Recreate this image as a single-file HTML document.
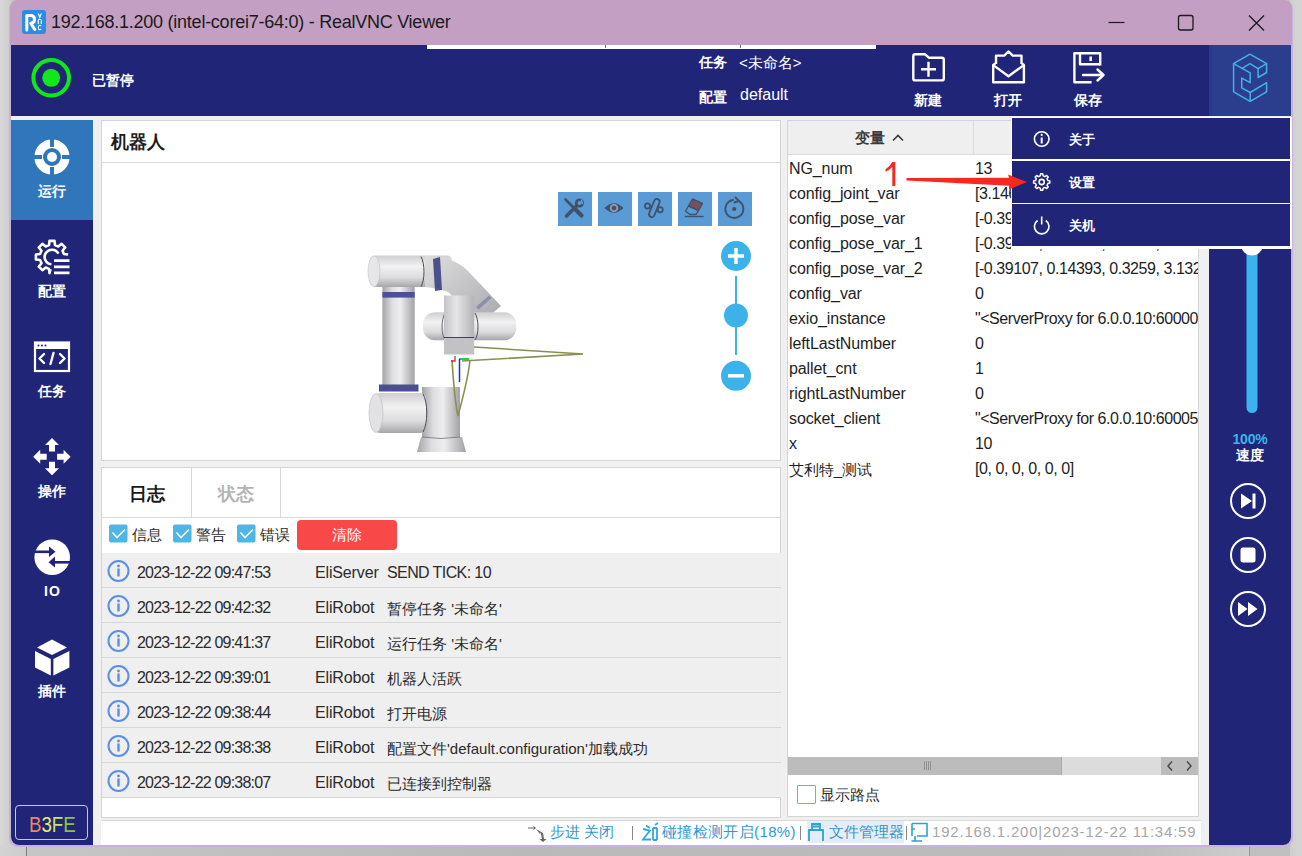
<!DOCTYPE html>
<html><head><meta charset="utf-8">
<style>
*{box-sizing:border-box;margin:0;padding:0}
html,body{width:1302px;height:856px;overflow:hidden;background:#c0c0c0;font-family:"Liberation Sans",sans-serif;position:relative}
.a{position:absolute}
svg{position:absolute;overflow:visible}
#desk-l{left:0;top:0;width:12px;height:856px;background:linear-gradient(to right,#d8d8d8,#cccccc)}
#desk-b{left:0;top:845px;width:1302px;height:11px;background:linear-gradient(to right,#d4d4d4,#c8c8c8 3%,#bdbdbd 50%,#c0c0c0)}
#desk-b2{left:26px;top:845px;width:1224px;height:11px;background:linear-gradient(to right,#c6c6c6,#b9b9b9 40%,#bcbcbc 90%,#cccccc);border-left:1px solid #808080;border-right:1px solid #9a9a9a}
#desk-r{left:1290px;top:0;width:12px;height:856px;background:linear-gradient(to right,#cfcfcf,#d6d6d6)}
#win{left:9px;top:0;width:1284px;height:847px;background:#c6b2dc;border-radius:9px}
#title{left:10px;top:0;width:1282px;height:45px;background:#c3a0c3;border-radius:8px 8px 0 0}
#title .t{left:41px;top:12px;font-size:18px;color:#1a1a1a;white-space:nowrap;letter-spacing:-0.25px}
#hdr{left:11px;top:45px;width:1280px;height:71px;background:#212577}
#main{left:11px;top:116px;width:1280px;height:729px;background:#f0f0f0;border-radius:0 0 8px 8px;overflow:hidden}
#sidebar{left:11px;top:120px;width:82px;height:725px;background:#212577;border-radius:0 0 0 8px}
#rside{left:1209px;top:120px;width:82px;height:725px;background:#212577;border-radius:0 0 8px 0}
.w{color:#fff;font-weight:bold}
.lbl{font-size:14px;color:#fff;font-weight:bold;white-space:nowrap}
.sl{width:82px;left:0;text-align:center;font-size:14px;color:#fff;font-weight:bold;margin-top:1px}
.panel{background:#fff;border:1px solid #d4d4d4}
.row{left:0;width:679px;height:35px;background:#efefef;border-bottom:1px solid #d6d6d6}
.row span{position:absolute;top:11px;font-size:16px;color:#2b2b2b;white-space:nowrap}
.row .d{left:35px;letter-spacing:-0.8px}
.row .s{left:213px;letter-spacing:-0.15px}
.row .m{left:285px;font-size:15px!important;top:12px!important}
.vr{left:0;width:410px;height:25px}
.vr span{position:absolute;top:4px;font-size:16px;color:#1e1e1e;white-space:nowrap;letter-spacing:-0.1px}
.vr .n{left:1px}
.vr .v{left:187px;letter-spacing:-0.45px}
.stt{top:823px;font-size:15px;color:#2f9ad2;white-space:nowrap}
</style></head>
<body>
<div class="a" id="desk-l"></div>
<div class="a" id="desk-b"></div>
<div class="a" id="desk-b2"></div>
<div class="a" id="desk-r"></div>
<div class="a" id="win"></div>
<div class="a" id="title">
  <div class="a t">192.168.1.200 (intel-corei7-64:0) - RealVNC Viewer</div>
</div>
<div class="a" id="hdr"></div>
<div class="a" id="main"></div>
<div class="a" id="sidebar"></div>
<div class="a" id="rside"></div>
<!-- title bar icons -->
<div class="a" style="left:22px;top:10px;width:24px;height:24px;background:#2b8de6;border-radius:3px"></div>
<svg style="left:22px;top:10px" width="24" height="24" viewBox="0 0 24 24">
 <path d="M4.8 20 V5.5 H8.5 Q12.5 5.5 12.5 9.5 Q12.5 13 8.8 13.2 L12.8 19.5" fill="none" stroke="#fff" stroke-width="3" stroke-linejoin="round" stroke-linecap="round"/>
 <path d="M16.3 3.5 L17.8 7.5 L19.3 3.5" fill="none" stroke="#fff" stroke-width="1.1"/>
 <path d="M16.3 14 V10.5 Q16.3 9.2 17.8 9.2 Q19.3 9.2 19.3 10.5 V14" fill="none" stroke="#fff" stroke-width="1.1"/>
 <path d="M19.2 16.2 Q18.5 15.3 17.7 15.3 Q16.3 15.3 16.3 17.5 Q16.3 19.7 17.7 19.7 Q18.5 19.7 19.2 18.8" fill="none" stroke="#fff" stroke-width="1.1"/>
</svg>
<svg style="left:1100px;top:8px" width="180" height="30" viewBox="0 0 180 30">
 <line x1="8.5" y1="14.5" x2="24.5" y2="14.5" stroke="#1a1a1a" stroke-width="1.2"/>
 <rect x="78.5" y="7.5" width="14.5" height="14.5" rx="2" fill="none" stroke="#1a1a1a" stroke-width="1.3"/>
 <path d="M149 7.5 L164 22.5 M164 7.5 L149 22.5" stroke="#1a1a1a" stroke-width="1.3"/>
</svg>
<!-- header -->
<div class="a" style="left:427px;top:45px;width:449px;height:4px;background:#fff"></div>
<div class="a" style="left:605px;top:45px;width:1px;height:3px;background:#777"></div>
<div class="a" style="left:740px;top:45px;width:1px;height:3px;background:#777"></div>
<svg style="left:0;top:0" width="120" height="120">
 <circle cx="51.2" cy="77.8" r="17.8" fill="none" stroke="#10e81a" stroke-width="4"/>
 <circle cx="51.2" cy="77.8" r="9" fill="#10e81a"/>
</svg>
<div class="a lbl" style="left:92px;top:72px;font-size:14px">已暂停</div>
<div class="a lbl" style="left:699px;top:54px">任务</div>
<div class="a" style="left:739px;top:54px;font-size:15px;color:#fff;white-space:nowrap">&lt;未命名&gt;</div>
<div class="a lbl" style="left:699px;top:89px">配置</div>
<div class="a" style="left:740px;top:86px;font-size:16px;color:#fff;white-space:nowrap">default</div>
<svg style="left:900px;top:45px" width="220" height="70" viewBox="900 45 220 70">
 <g fill="none" stroke="#fff" stroke-width="2.4" stroke-linejoin="round">
  <path d="M915.3 54.2 H925 L929 57.8 H941.8 Q943.8 57.8 943.8 59.8 V78.4 Q943.8 80.4 941.8 80.4 H915.3 Q913.3 80.4 913.3 78.4 V56.2 Q913.3 54.2 915.3 54.2 Z"/>
  <path d="M928.5 61.8 V76.8 M921 69.3 H936"/>
  <path d="M996 64 V55.6 H1004.2 L1008.5 51.5 L1012.8 55.6 H1021.5 V64"/>
  <path d="M995.3 63.6 L993.2 65 V82.2 H1023.9 V65 L1021.8 63.6"/>
  <path d="M994 65.6 L1008.5 76.2 L1023.2 65.6"/>
  <path d="M1091.6 82.2 H1074.4 V53.3 H1100.2 V65.6"/>
  <path d="M1080 53.3 V64.2 H1100.2"/>
  <path d="M1083 75 H1103.5 M1097.5 69.5 L1103.5 75 L1097.5 80.5" stroke-linecap="round"/>
 </g>
 <rect x="1089.4" y="56.5" width="2.6" height="4.5" fill="#fff"/>
</svg>
<div class="a lbl" style="left:914px;top:92px">新建</div>
<div class="a lbl" style="left:994px;top:92px">打开</div>
<div class="a lbl" style="left:1074px;top:92px">保存</div>
<div class="a" style="left:1209px;top:45px;width:82px;height:71px;background:#2b3e8e;border-left:3px solid #293a8a"></div>
<svg style="left:1220px;top:45px" width="60" height="70" viewBox="1220 45 60 70">
 <g fill="none" stroke="#44b0e6" stroke-width="1.5" stroke-linejoin="round" stroke-linecap="round">
  <path d="M1249.9 54.2 L1266.6 63.7 V72.5 L1258.1 77.5 V68.6 L1249.9 63.7 L1242.1 68.3 L1233.6 63.7 Z"/>
  <path d="M1258.1 68.6 L1266.6 63.7"/>
  <path d="M1233.6 63.7 V91.8 L1250.2 101.3 L1266.6 91.8 V82.7 L1250.2 92.5 L1241.7 87.9 V78.1 L1250.2 82.7 V72.9 L1242.1 68.3"/>
  <path d="M1250.2 92.5 V101.3"/>
 </g>
</svg>

<div class="a" style="left:11px;top:120px;width:82px;height:100px;background:#2f77ba"></div>
<svg style="left:0;top:100px" width="100" height="620" viewBox="0 100 100 620">
 <!-- run icon -->
 <g>
  <circle cx="52" cy="157" r="13.3" fill="none" stroke="#fff" stroke-width="8.6"/>
  <circle cx="52" cy="157" r="5" fill="#fff"/>
  <rect x="50" y="136" width="4" height="11" fill="#2f77ba"/>
  <rect x="50" y="167" width="4" height="11" fill="#2f77ba"/>
  <rect x="31" y="155" width="11" height="4" fill="#2f77ba"/>
  <rect x="62" y="155" width="11" height="4" fill="#2f77ba"/>
 </g>
 <!-- config gear -->
 <g fill="none" stroke="#fff" stroke-width="2.6" stroke-linejoin="round">
  <path d="M50.5 269.2 L49.5 273.1 L49.0 268.9 L45.7 267.5 L42.4 270.2 L38.8 266.6 L41.5 263.3 L40.1 260.0 L35.9 259.5 L35.9 254.5 L40.1 254.0 L41.5 250.7 L38.8 247.4 L42.4 243.8 L45.7 246.5 L49.0 245.1 L49.5 240.9 L54.5 240.9 L55.0 245.1 L58.3 246.5 L61.6 243.8 L65.2 247.4 L62.5 250.7 L63.9 254.0 L68.1 254.5"/>
  <path d="M58.4 253.6 A7.3 7.3 0 1 0 51.4 264.3"/>
 </g>
 <path d="M54 260.6 H69.5 M54 266.8 H69.5 M54 272.9 H69.5" stroke="#fff" stroke-width="2.8"/>
 <!-- task window -->
 <rect x="35" y="342.5" width="34" height="28.5" fill="none" stroke="#fff" stroke-width="2.2"/>
 <rect x="35" y="342.5" width="34" height="6.5" fill="#fff"/>
 <circle cx="38.5" cy="345.6" r="1" fill="#212577"/>
 <circle cx="42" cy="345.6" r="1" fill="#212577"/>
 <circle cx="45.5" cy="345.6" r="1" fill="#212577"/>
 <path d="M44 354 L39.5 358.5 L44 363 M60 354 L64.5 358.5 L60 363 M53.5 353 L50.5 364" fill="none" stroke="#fff" stroke-width="2.4" stroke-linecap="round" stroke-linejoin="round"/>
 <!-- move arrows -->
 <g fill="#fff">
  <path d="M52 438 L59 445 H55 V451.5 H49 V445 H45 Z"/>
  <path d="M52 475.3 L59 468.3 H55 V461.8 H49 V468.3 H45 Z"/>
  <path d="M33.2 456.7 L40.2 449.7 V453.7 H46.7 V459.7 H40.2 V463.7 Z"/>
  <path d="M70.6 456.7 L63.6 449.7 V453.7 H57.1 V459.7 H63.6 V463.7 Z"/>
 </g>
 <!-- IO -->
 <circle cx="52.2" cy="557.2" r="17.8" fill="#fff"/>
 <g fill="#212577">
  <rect x="33" y="550.5" width="20" height="2.6"/>
  <path d="M49 546.5 L55.5 551.8 L49 557 Z"/>
  <rect x="51" y="561" width="20" height="2.6"/>
  <path d="M55 556.5 L48.5 562.3 L55 567.5 Z"/>
 </g>
 <!-- plugin cube -->
 <g fill="#fff">
  <path d="M52 639.5 L67 647.5 L52 655 L37 647.5 Z"/>
  <path d="M35 651 L50.8 659 V675.5 L35 667.5 Z"/>
  <path d="M69.4 651 L53.4 659 V675.5 L69.4 667.5 Z"/>
 </g>
</svg>
<div class="a sl" style="left:11px;top:182px">运行</div>
<div class="a sl" style="left:11px;top:282px">配置</div>
<div class="a sl" style="left:11px;top:382px">任务</div>
<div class="a sl" style="left:11px;top:482px">操作</div>
<div class="a sl" style="left:11px;top:582px;font-size:14px;letter-spacing:1px;text-indent:1px">IO</div>
<div class="a sl" style="left:11px;top:682px">插件</div>
<div class="a" style="left:15px;top:805px;width:73px;height:35px;border:1px solid #c8c4f0;border-radius:4px"></div>
<div class="a" style="left:29px;top:812px;font-size:22.5px;white-space:nowrap;letter-spacing:0;transform:scaleX(0.83);transform-origin:0 0"><span style="color:#ee8660">B</span><span style="color:#eaee60">3</span><span style="color:#c8e45a">F</span><span style="color:#8cc43e">E</span></div>

<div class="a panel" style="left:101px;top:120px;width:680px;height:341px"></div>
<div class="a" style="left:102px;top:162px;width:678px;height:1px;background:#d9d9d9"></div>
<div class="a" style="left:111px;top:130px;font-size:18px;font-weight:bold;color:#1e1e1e;white-space:nowrap">机器人</div>
<div class="a" style="left:558px;top:192px;width:34px;height:34px;background:#5a9bd6"></div>
<div class="a" style="left:598px;top:192px;width:34px;height:34px;background:#5a9bd6"></div>
<div class="a" style="left:638px;top:192px;width:34px;height:34px;background:#5a9bd6"></div>
<div class="a" style="left:678px;top:192px;width:34px;height:34px;background:#5a9bd6"></div>
<div class="a" style="left:718px;top:192px;width:34px;height:34px;background:#5a9bd6"></div>
<svg style="left:550px;top:180px" width="210" height="60" viewBox="550 180 210 60">
 <g stroke="#3f5269" fill="none" stroke-linecap="round">
  <path d="M565.5 199.5 L575 209" stroke-width="2.6"/>
  <path d="M576 210 L581.5 215.5" stroke-width="4.2"/>
  <path d="M576.5 206 L566.5 216" stroke-width="3.6"/>
  <circle cx="579.5" cy="203" r="3.3" stroke-width="2.6"/>
 </g>
 <path d="M582 199 L579 203 L583.5 204.5 Z" fill="#5a9bd6"/>
 <path d="M604.5 208 Q614 198.5 623.5 208 Q614 217.5 604.5 208 Z" fill="#3f5269"/>
 <circle cx="614" cy="208" r="4.3" fill="#8896a8"/>
 <circle cx="614" cy="208" r="2.2" fill="#3f5269"/>
 <g stroke="#3f5269" fill="none" stroke-width="1.8">
  <circle cx="647.5" cy="206" r="2.6"/>
  <circle cx="660.2" cy="209.8" r="2.6"/>
  <rect x="651.5" y="198.5" width="5.6" height="19" rx="2.8" transform="rotate(22 654.3 208)"/>
 </g>
 <g stroke="#3f5269" fill="none" stroke-width="1.4" stroke-linejoin="round">
  <path d="M692.5 199 L702.5 203.5 L698.5 210.5 L688.5 206 Z" fill="#7c4e5e"/>
  <path d="M688.5 206 L685.5 211 L690 214.5 L696 214.5 L698.5 210.5"/>
  <path d="M684.8 216.5 H703.7"/>
 </g>
 <g stroke="#3f5269" fill="none" stroke-width="1.9" stroke-linecap="round">
  <path d="M739.5 201.5 A9 9 0 1 1 733 200"/>
  <path d="M735.5 197.5 L738.8 200.8 L734.5 202.5"/>
 </g>
 <circle cx="734.2" cy="209" r="2.1" fill="#4d4a5e"/>
</svg>
<svg style="left:700px;top:230px" width="80" height="170" viewBox="700 230 80 170">
 <line x1="736" y1="276" x2="736" y2="355" stroke="#3bb3ea" stroke-width="2"/>
 <circle cx="736" cy="256" r="15" fill="#3bb3ea"/>
 <path d="M736 248 V264 M728 256 H744" stroke="#fff" stroke-width="3.5"/>
 <circle cx="736" cy="315.5" r="12" fill="#3bb3ea"/>
 <circle cx="736" cy="375.8" r="15" fill="#3bb3ea"/>
 <path d="M728 375.8 H744" stroke="#fff" stroke-width="3.5"/>
</svg>
<!-- robot arm -->
<svg style="left:340px;top:240px" width="260" height="221" viewBox="340 240 260 221">
 <defs>
  <linearGradient id="gv" x1="0" x2="1" y1="0" y2="0">
   <stop offset="0" stop-color="#a4a4a8"/><stop offset="0.3" stop-color="#dedee0"/><stop offset="0.55" stop-color="#eeeeef"/><stop offset="1" stop-color="#a2a2a6"/>
  </linearGradient>
  <linearGradient id="gh" x1="0" x2="0" y1="0" y2="1">
   <stop offset="0" stop-color="#cfcfd2"/><stop offset="0.35" stop-color="#f2f2f2"/><stop offset="0.7" stop-color="#dcdcde"/><stop offset="1" stop-color="#a6a6aa"/>
  </linearGradient>
  <linearGradient id="gd" x1="0" x2="1" y1="0" y2="1">
   <stop offset="0" stop-color="#dedede"/><stop offset="0.5" stop-color="#c4c4c6"/><stop offset="1" stop-color="#a8a8ac"/>
  </linearGradient>
  <linearGradient id="gw" x1="0" x2="1" y1="0" y2="0">
   <stop offset="0" stop-color="#c4c4c6"/><stop offset="0.4" stop-color="#e6e6e8"/><stop offset="1" stop-color="#b4b4b8"/>
  </linearGradient>
 </defs>
 <!-- base -->
 <path d="M421 437 H462 L466 452 H417 Z" fill="url(#gv)"/>
 <rect x="422" y="387" width="38" height="50" fill="url(#gv)"/>
 <path d="M422 437 Q441 440 460 437" stroke="#707078" stroke-width="0.8" fill="none"/>
 <!-- lower joint -->
 <rect x="374" y="393" width="52" height="40" rx="6" fill="url(#gh)"/>
 <ellipse cx="376" cy="413" rx="7" ry="19.5" fill="#e2e2e4" stroke="#b8b8bc" stroke-width="0.6"/>
 <path d="M423 394 C428 402 428 424 423 432" stroke="#4a4a58" stroke-width="1" fill="none"/>
 <!-- column -->
 <rect x="382.4" y="284" width="32.3" height="105" fill="url(#gv)"/>
 <rect x="382.4" y="292" width="32.3" height="5.6" fill="#4c509a"/>
 <rect x="379" y="384.5" width="39.5" height="7" fill="#4a4f92"/>
 <!-- upper joint -->
 <rect x="372" y="255.5" width="80" height="31.5" rx="5" fill="url(#gh)"/>
 <ellipse cx="374" cy="271.2" rx="6" ry="15.5" fill="#e6e6e8" stroke="#c0c0c4" stroke-width="0.6"/>
 <path d="M421 256.5 C425 264 425 280 421 286.5" stroke="#4a4a58" stroke-width="1" fill="none"/>
 <!-- forearm -->
 <path d="M425 256 Q452 256 467 270 L501 306 L481 323 L448 292 Q438 288 425 287 Z" fill="url(#gd)"/>
 <path d="M433 259 L440 257 L442 290 L435 291 Z" fill="#3e4282" opacity="0.9"/>
 <path d="M476 307 L489 295.5 L491.5 298 L478.5 309.5 Z" fill="#6a6e9c" opacity="0.55"/>
 <!-- wrist -->
 <rect x="423" y="312.3" width="93.3" height="28" rx="12" fill="url(#gh)"/>
 <path d="M475 313 C479 320 479 334 475 340" stroke="#505060" stroke-width="1" fill="none"/>
 <path d="M445 313 C441 320 441 334 445 340" stroke="#505060" stroke-width="0.8" fill="none"/>
 <rect x="444" y="295.5" width="30.2" height="42" fill="url(#gw)"/>
 <rect x="444" y="337.5" width="30.2" height="17" fill="#c2c2c4"/>
 <path d="M444 337.5 H474.2" stroke="#404050" stroke-width="1"/>
 <!-- paths -->
 <g fill="none" stroke="#8a8f50" stroke-width="1.6">
  <path d="M474 347 L583 354 L462 361"/>
  <path d="M452 360 C454 390 456 408 458 416 C462 400 468 380 470 360"/>
 </g>
 <path d="M459 359 H469" stroke="#22d040" stroke-width="2"/>
 <path d="M459.5 359 V382" stroke="#2030c0" stroke-width="1.5"/>
 <path d="M455 356 V361 H451" stroke="#d03030" stroke-width="1.3" fill="none"/>
</svg>

<div class="a panel" style="left:101px;top:467px;width:680px;height:351px"></div>
<div class="a" style="left:102px;top:517px;width:678px;height:1px;background:#d9d9d9"></div>
<div class="a" style="left:191px;top:468px;width:1px;height:49px;background:#d9d9d9"></div>
<div class="a" style="left:280px;top:468px;width:1px;height:49px;background:#d9d9d9"></div>
<div class="a" style="left:129px;top:482px;font-size:18px;font-weight:bold;color:#1a1a1a;white-space:nowrap">日志</div>
<div class="a" style="left:218px;top:482px;font-size:18px;font-weight:bold;color:#b4b4b4;white-space:nowrap">状态</div>
<svg style="left:100px;top:520px" width="200" height="30" viewBox="100 520 200 30">
 <g fill="#4db6e4">
  <rect x="109" y="524.5" width="18.5" height="18" rx="2"/>
  <rect x="173" y="524.5" width="18.5" height="18" rx="2"/>
  <rect x="237" y="524.5" width="18.5" height="18" rx="2"/>
 </g>
 <g fill="none" stroke="#fff" stroke-width="1.6">
  <path d="M112.5 532.5 L117 537.5 L125 529.5"/>
  <path d="M176.5 532.5 L181 537.5 L189 529.5"/>
  <path d="M240.5 532.5 L245 537.5 L253 529.5"/>
 </g>
</svg>
<div class="a" style="left:132px;top:526px;font-size:15px;color:#2b2b2b;white-space:nowrap">信息</div>
<div class="a" style="left:196px;top:526px;font-size:15px;color:#2b2b2b;white-space:nowrap">警告</div>
<div class="a" style="left:260px;top:526px;font-size:15px;color:#2b2b2b;white-space:nowrap">错误</div>
<div class="a" style="left:297px;top:520px;width:100px;height:30px;background:#f84848;border-radius:4px;color:#fff;font-size:15px;text-align:center;line-height:30px">清除</div>
<div class="a" style="left:102px;top:553px;width:679px;height:245px">
 <div class="a row" style="top:0"><span class="d">2023-12-22 09:47:53</span><span class="s">EliServer</span><span class="m" style="font-size:16px!important;top:11px!important;letter-spacing:-0.6px">SEND TICK: 10</span></div>
 <div class="a row" style="top:35px"><span class="d">2023-12-22 09:42:32</span><span class="s">EliRobot</span><span class="m">暂停任务 '未命名'</span></div>
 <div class="a row" style="top:70px"><span class="d">2023-12-22 09:41:37</span><span class="s">EliRobot</span><span class="m">运行任务 '未命名'</span></div>
 <div class="a row" style="top:105px"><span class="d">2023-12-22 09:39:01</span><span class="s">EliRobot</span><span class="m">机器人活跃</span></div>
 <div class="a row" style="top:140px"><span class="d">2023-12-22 09:38:44</span><span class="s">EliRobot</span><span class="m">打开电源</span></div>
 <div class="a row" style="top:175px"><span class="d">2023-12-22 09:38:38</span><span class="s">EliRobot</span><span class="m">配置文件'default.configuration'加载成功</span></div>
 <div class="a row" style="top:210px"><span class="d">2023-12-22 09:38:07</span><span class="s">EliRobot</span><span class="m">已连接到控制器</span></div>
</div>
<svg style="left:100px;top:553px" width="40" height="245" viewBox="100 553 40 245">
 <g id="ic">
  <circle cx="118.5" cy="571" r="10" fill="none" stroke="#5c8ee8" stroke-width="2"/>
  <circle cx="118.5" cy="566" r="1.4" fill="#5c8ee8"/>
  <rect x="117.3" y="568.5" width="2.4" height="8" fill="#5c8ee8"/>
 </g>
 <use href="#ic" y="35"/><use href="#ic" y="70"/><use href="#ic" y="105"/><use href="#ic" y="140"/><use href="#ic" y="175"/><use href="#ic" y="210"/>
</svg>

<div class="a panel" style="left:787px;top:120px;width:412px;height:697px"></div>
<div class="a" style="left:788px;top:121px;width:410px;height:34px;background:#efefef;border-bottom:1px solid #dcdcdc"></div>
<div class="a" style="left:973px;top:121px;width:1px;height:33px;background:#dcdcdc"></div>
<div class="a" style="left:855px;top:129px;font-size:15px;font-weight:bold;color:#3a3a3a;white-space:nowrap">变量</div>
<svg style="left:890px;top:130px" width="16" height="16" viewBox="0 0 16 16"><path d="M3 10.5 L8 5.5 L13 10.5" fill="none" stroke="#3a3a3a" stroke-width="1.6"/></svg>
<div class="a" style="left:788px;top:156px;width:410px;height:330px;overflow:hidden">
 <div class="a vr" style="top:0"><span class="n">NG_num</span><span class="v">13</span></div>
 <div class="a vr" style="top:25px"><span class="n">config_joint_var</span><span class="v">[3.14601, 0.1, 0.2]</span></div>
 <div class="a vr" style="top:50px"><span class="n">config_pose_var</span><span class="v">[-0.39107, 0.14393, 0.3259, 3.1325</span></div>
 <div class="a vr" style="top:75px"><span class="n">config_pose_var_1</span><span class="v">[-0.39107, 0.14393, 0.3259, 3.1325</span></div>
 <div class="a vr" style="top:100px"><span class="n">config_pose_var_2</span><span class="v">[-0.39107, 0.14393, 0.3259, 3.1325</span></div>
 <div class="a vr" style="top:125px"><span class="n">config_var</span><span class="v">0</span></div>
 <div class="a vr" style="top:150px"><span class="n">exio_instance</span><span class="v">"&lt;ServerProxy for 6.0.0.10:60000/</span></div>
 <div class="a vr" style="top:175px"><span class="n">leftLastNumber</span><span class="v">0</span></div>
 <div class="a vr" style="top:200px"><span class="n">pallet_cnt</span><span class="v">1</span></div>
 <div class="a vr" style="top:225px"><span class="n">rightLastNumber</span><span class="v">0</span></div>
 <div class="a vr" style="top:250px"><span class="n">socket_client</span><span class="v">"&lt;ServerProxy for 6.0.0.10:60005/</span></div>
 <div class="a vr" style="top:275px"><span class="n">x</span><span class="v">10</span></div>
 <div class="a vr" style="top:300px"><span class="n" style="font-size:15px;top:5px">艾利特_测试</span><span class="v">[0, 0, 0, 0, 0, 0]</span></div>
</div>
<div class="a" style="left:788px;top:757px;width:410px;height:18px;background:#dcdcdc"></div>
<div class="a" style="left:788px;top:757px;width:274px;height:18px;background:#bcbcbc;border-right:1px solid #a8a8a8"></div>
<div class="a" style="left:1161px;top:757px;width:37px;height:18px;background:#bcbcbc"></div>
<svg style="left:780px;top:750px" width="430" height="30" viewBox="780 750 430 30">
 <path d="M924.5 761 V770 M926.5 761 V770 M928.5 761 V770 M930.5 761 V770" stroke="#888" stroke-width="0.8"/>
 <path d="M1172 761.5 L1168 766 L1172 770.5 M1187 761.5 L1191 766 L1187 770.5" fill="none" stroke="#444" stroke-width="1.4"/>
</svg>
<div class="a" style="left:797px;top:785px;width:19px;height:19px;border:1px solid #58b8e6;background:#fff;border-radius:1px"></div>
<div class="a" style="left:820px;top:786px;font-size:15px;color:#2b2b2b;white-space:nowrap">显示路点</div>

<div class="a" style="left:101px;top:820px;width:1100px;height:25px;background:#fff;border-top:1px solid #d8d8d8"></div>
<div class="a" style="left:807px;top:821px;width:97px;height:22px;background:#e4eef8"></div>
<svg style="left:520px;top:820px" width="420" height="25" viewBox="520 820 420 25">
 <g fill="#666">
  <path d="M528 827.5 H534 L533 825.5 L536 828 L533 830.5 L534 828.5 H528 Z"/>
  <path d="M536 829 L541 832 L540 834 Z" />
  <path d="M540.5 831.5 L542 839 H539.5 L543 842 L546.5 839 H544 L543 833 Z"/>
 </g>
 <path d="M632.5 826 V840" stroke="#888" stroke-width="1"/>
 <g fill="none" stroke="#2fa8e0" stroke-width="1.8">
  <path d="M643 829 L650 830.5 L643 839.5 H651"/>
  <path d="M653 828 V840 M657 828 V840 M653 828 H657 M653 840 H657"/>
  <path d="M646 825.5 L650 828 M655 825 L658 823"/>
 </g>
 <path d="M800.5 826 V840" stroke="#888" stroke-width="1"/>
 <g fill="none" stroke="#2fa0d4" stroke-width="1.8">
  <path d="M809 841 V830 H823 V841"/>
  <path d="M812 830 V824 H820 V830 M812 826.5 H820"/>
 </g>
 <path d="M906.5 826 V840" stroke="#888" stroke-width="1"/>
 <g fill="none" stroke="#2fa0d4" stroke-width="1.6">
  <path d="M912 823.5 H927 V836 H917"/>
  <path d="M912 823.5 V836 M915 836 V841 M911.5 841 H922 M912 829 H915"/>
 </g>
</svg>
<div class="a stt" style="left:550px">步进 关闭</div>
<div class="a stt" style="left:662px;letter-spacing:0.35px">碰撞检测开启(18%)</div>
<div class="a stt" style="left:829px;color:#3a92c6">文件管理器</div>
<div class="a stt" style="left:932px;color:#a6a6a6;letter-spacing:0.8px">192.168.1.200|2023-12-22 11:34:59</div>

<svg style="left:1209px;top:120px" width="82" height="725" viewBox="1209 120 82 725">
 <rect x="1246.5" y="160" width="11" height="253" rx="5.5" fill="#3ab4ee"/>
 <circle cx="1252" cy="244.5" r="11" fill="#fff"/>
 <g fill="none" stroke="#fff" stroke-width="2">
  <circle cx="1248" cy="501" r="17"/>
  <circle cx="1248" cy="555" r="17"/>
  <circle cx="1248" cy="609" r="17"/>
 </g>
 <g fill="#fff">
  <path d="M1241 493.5 L1252 501 L1241 508.5 Z"/>
  <rect x="1252.5" y="493.5" width="3" height="15"/>
  <rect x="1240.5" y="547.5" width="15" height="15" rx="2.5"/>
  <path d="M1238 602 L1247.5 609 L1238 616 Z"/>
  <path d="M1248 602 L1257.5 609 L1248 616 Z"/>
 </g>
</svg>
<div class="a" style="left:1209px;top:431px;width:82px;text-align:center;font-size:14px;font-weight:bold;color:#3ab4ee;letter-spacing:-0.2px">100%</div>
<div class="a" style="left:1209px;top:447px;width:82px;text-align:center;font-size:14px;font-weight:bold;color:#fff">速度</div>

<div class="a" style="left:1011px;top:117px;width:281px;height:132px;background:#fff"></div>
<div class="a" style="left:1012px;top:118px;width:278px;height:41px;background:#212577"></div>
<div class="a" style="left:1012px;top:161px;width:278px;height:42px;background:#212577"></div>
<div class="a" style="left:1012px;top:204px;width:278px;height:42px;background:#212577"></div>
<svg style="left:1020px;top:120px" width="50" height="125" viewBox="1020 120 50 125">
 <g fill="none" stroke="#fff" stroke-width="1.6" stroke-linejoin="round">
  <circle cx="1041.7" cy="139" r="7.3"/>
  <path d="M1041.7 137.5 V143.5" stroke-width="2"/>
  <path d="M1047.83 180.53 L1049.83 180.91 L1049.83 183.09 L1047.83 183.47 L1047.07 185.29 L1048.22 186.97 L1046.67 188.52 L1044.99 187.37 L1043.17 188.13 L1042.79 190.13 L1040.61 190.13 L1040.23 188.13 L1038.41 187.37 L1036.73 188.52 L1035.18 186.97 L1036.33 185.29 L1035.57 183.47 L1033.57 183.09 L1033.57 180.91 L1035.57 180.53 L1036.33 178.71 L1035.18 177.03 L1036.73 175.48 L1038.41 176.63 L1040.23 175.87 L1040.61 173.87 L1042.79 173.87 L1043.17 175.87 L1044.99 176.63 L1046.67 175.48 L1048.22 177.03 L1047.07 178.71 Z" stroke-width="1.5"/>
  <circle cx="1041.7" cy="182" r="2.6"/>
  <path d="M1037.6 220.5 A7.3 7.3 0 1 0 1045.8 220.5"/>
  <path d="M1041.7 216.5 V224.5"/>
 </g>
 <circle cx="1041.7" cy="134.9" r="1.1" fill="#fff"/>
</svg>
<div class="a" style="left:1069px;top:131px;font-size:13px;font-weight:bold;color:#fff;white-space:nowrap">关于</div>
<div class="a" style="left:1069px;top:174px;font-size:13px;font-weight:bold;color:#fff;white-space:nowrap">设置</div>
<div class="a" style="left:1069px;top:217px;font-size:13px;font-weight:bold;color:#fff;white-space:nowrap">关机</div>
<!-- annotation -->
<svg style="left:880px;top:158px" width="20" height="32" viewBox="880 158 20 32"><path d="M892.3 162 H895.3 V186 H892.3 V167 Q889.5 170 885.5 171.8 V169.2 Q889.8 166.5 892.3 162 Z" fill="#f42a20"/></svg>
<svg style="left:900px;top:170px" width="130" height="25" viewBox="900 170 130 25">
 <path d="M906.5 178 L1009 177.8 L1008 174.5 L1027 182 L1009 189.5 L1009 185.8 L906.5 180.5 Z" fill="#f42a20"/>
</svg>

</body></html>
